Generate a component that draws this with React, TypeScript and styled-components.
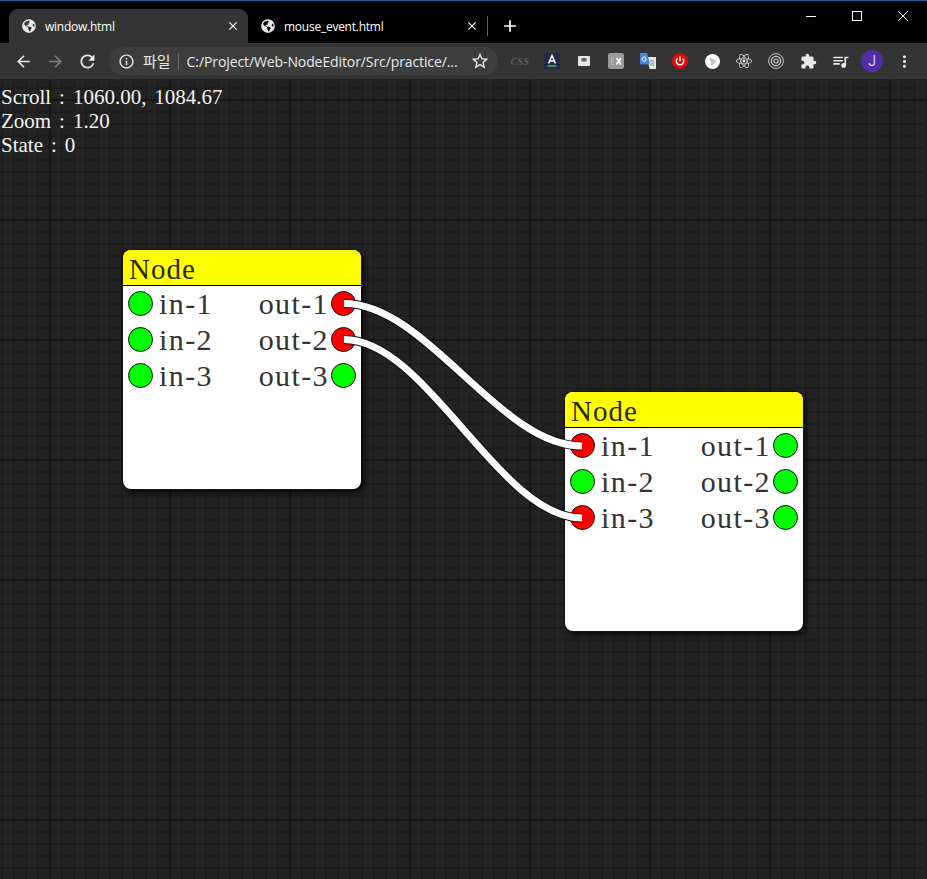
import React from "react";
import styled, { createGlobalStyle } from "styled-components";
import {
  MdAdd,
  MdArrowBack,
  MdArrowForward,
  MdClose,
  MdExtension,
  MdInfoOutline,
  MdMoreVert,
  MdQueueMusic,
  MdRefresh,
  MdStarBorder,
} from "react-icons/md";
import { FaGlobeAmericas, FaReact } from "react-icons/fa";

const GlobalStyle = createGlobalStyle`
  html, body {
    margin: 0;
    padding: 0;
    background: #222;
  }
`;

const Page = styled.div`
  width: 927px;
  height: 879px;
  display: flex;
  flex-direction: column;
  overflow: hidden;
  font-family: "Open Sans", "Noto Sans CJK KR", sans-serif;
`;

const TitleBar = styled.div`
  height: 43px;
  box-sizing: border-box;
  background: #000;
  border-top: 1px solid #1f5f9e;
  padding: 8px 1px 0 9px;
  display: flex;
  align-items: stretch;
  color: #fff;
`;

const Tab = styled.div<{ $active?: boolean }>`
  width: 239px;
  box-sizing: border-box;
  padding: 0 8px 0 13px;
  display: flex;
  align-items: center;
  gap: 9px;
  border-radius: 9px 9px 0 0;
  background: ${(p) => (p.$active ? "#343434" : "transparent")};
  font-size: 12px;
  letter-spacing: -0.25px;
`;

const TabTitle = styled.span`
  flex: 1;
  white-space: nowrap;
`;

const TabDivider = styled.div`
  width: 1px;
  height: 20px;
  margin-top: 7px;
  background: #5f6368;
`;

const NewTab = styled.div`
  width: 44px;
  display: flex;
  align-items: center;
  justify-content: center;
`;

const WindowControls = styled.div`
  margin: -8px 0 0 auto;
  display: flex;
  height: 30px;
`;

const WindowButton = styled.div`
  width: 46px;
  display: flex;
  align-items: center;
  justify-content: center;
`;

const Toolbar = styled.div`
  height: 36px;
  background: #343434;
  display: flex;
  align-items: center;
  color: #f1f3f4;
`;

const NavButton = styled.div<{ $dim?: boolean }>`
  width: 32px;
  height: 32px;
  display: flex;
  align-items: center;
  justify-content: center;
  color: ${(p) => (p.$dim ? "#7e8083" : "#e8eaed")};
`;

const NavGroup = styled.div`
  display: flex;
  padding-left: 7px;
  width: 109px;
  box-sizing: border-box;
`;

const Omnibox = styled.div`
  width: 389px;
  height: 28px;
  box-sizing: border-box;
  border-radius: 14px;
  background: #3d3d3d;
  display: flex;
  align-items: center;
  padding: 0 8px 0 9px;
  color: #e8eaed;
  white-space: nowrap;
`;

const SiteLabel = styled.span`
  margin-left: 8px;
  padding-right: 7px;
  border-right: 1px solid #6b6d70;
  line-height: 17px;
  font-size: 15px;
`;

const Url = styled.span`
  margin-left: 8px;
  flex: 1;
  font-size: 14px;
  letter-spacing: -0.1px;
`;

const Extensions = styled.div`
  margin-left: 6px;
  display: flex;
`;

const Ext = styled.div`
  width: 32px;
  height: 32px;
  display: flex;
  align-items: center;
  justify-content: center;
  color: #e8eaed;
`;

const CssMark = styled.span`
  font-family: "Liberation Serif", serif;
  font-size: 10px;
  font-style: italic;
  font-weight: 700;
  letter-spacing: 0.4px;
  color: #5f5f5f;
`;

const Avatar = styled.div`
  width: 22px;
  height: 22px;
  border-radius: 50%;
  background: #512da8;
  color: #dcd3f2;
  font-family: Roboto, sans-serif;
  font-size: 14px;
  display: flex;
  align-items: center;
  justify-content: center;
`;

const Canvas = styled.div`
  flex: 1;
  position: relative;
  overflow: hidden;
  font-family: "Liberation Serif", "Noto Serif CJK KR", serif;
  background-color: #232323;
  background-image:
    linear-gradient(to right, #161616 2px, transparent 2px),
    linear-gradient(to bottom, #161616 2px, transparent 2px),
    linear-gradient(to right, #1d1d1d 2px, transparent 2px),
    linear-gradient(to bottom, #1d1d1d 2px, transparent 2px);
  background-size: 120px 120px, 120px 120px, 12px 12px, 12px 12px;
  background-position: 49px 0, 0 20px, 1px 0, 0 8px;
`;

const Status = styled.div`
  padding: 6px 0 0 1px;
  font-size: 21px;
  line-height: 24px;
  word-spacing: 2.7px;
  color: #f2f2f2;
`;

const Node = styled.div<{ $x: number; $y: number }>`
  position: absolute;
  left: ${(p) => p.$x}px;
  top: ${(p) => p.$y}px;
  width: 238px;
  height: 239px;
  background: #fff;
  border-radius: 8px;
  overflow: hidden;
  box-shadow: 0 0 0 1px #111, 3px 4px 6px rgba(0, 0, 0, 0.75);
`;

const NodeHeader = styled.div`
  height: 36px;
  box-sizing: border-box;
  background: #ff0;
  border-bottom: 1px solid #000;
  padding-left: 6px;
  font-size: 29px;
  line-height: 38px;
  letter-spacing: 1px;
  color: #2a2a00;
`;

const NodeRow = styled.div`
  height: 36px;
  display: flex;
  justify-content: space-between;
  align-items: center;
  padding: 0 5px;
  font-size: 30px;
  letter-spacing: 1.4px;
  color: #333;
`;

const PortGroup = styled.div<{ $gap: number }>`
  display: flex;
  align-items: center;
  gap: ${(p) => p.$gap}px;
  line-height: 40px;
`;

const Port = styled.span<{ $linked?: boolean }>`
  width: 25px;
  height: 25px;
  margin-bottom: 1px;
  box-sizing: border-box;
  border-radius: 50%;
  border: 1px solid #111;
  background: ${(p) => (p.$linked ? "#f00" : "#0f0")};
`;

const Wires = styled.svg`
  position: absolute;
  left: 0;
  top: 0;
  width: 927px;
  height: 800px;
  pointer-events: none;
`;

const Globe = () => <FaGlobeAmericas size={14} color="#e8eaed" />;

const NodeCard = ({
  x,
  y,
  linkedIn = [],
  linkedOut = [],
}: {
  x: number;
  y: number;
  linkedIn?: number[];
  linkedOut?: number[];
}) => (
  <Node $x={x} $y={y}>
    <NodeHeader>Node</NodeHeader>
    {[1, 2, 3].map((n) => (
      <NodeRow key={n}>
        <PortGroup $gap={6}>
          <Port $linked={linkedIn.includes(n)} />
          <span>in-{n}</span>
        </PortGroup>
        <PortGroup $gap={2}>
          <span>out-{n}</span>
          <Port $linked={linkedOut.includes(n)} />
        </PortGroup>
      </NodeRow>
    ))}
  </Node>
);

const wirePaths = [
  "M344 224.5 C427 224.5 499 367 582 367",
  "M344 260.5 C427 260.5 499 439 582 439",
];

export default function App() {
  return (
    <Page>
      <GlobalStyle />
      <TitleBar>
        <Tab $active>
          <Globe />
          <TabTitle>window.html</TabTitle>
          <MdClose size={14} />
        </Tab>
        <Tab>
          <Globe />
          <TabTitle>mouse_event.html</TabTitle>
          <MdClose size={14} />
        </Tab>
        <TabDivider />
        <NewTab>
          <MdAdd size={20} />
        </NewTab>
        <WindowControls>
          <WindowButton>
            <svg width="10" height="10" viewBox="0 0 10 10">
              <path d="M0 5.5H10" stroke="#fff" />
            </svg>
          </WindowButton>
          <WindowButton>
            <svg width="10" height="10" viewBox="0 0 10 10">
              <rect x="0.5" y="0.5" width="9" height="9" fill="none" stroke="#fff" />
            </svg>
          </WindowButton>
          <WindowButton>
            <svg width="10" height="10" viewBox="0 0 10 10">
              <path d="M0 0L10 10M10 0L0 10" stroke="#fff" />
            </svg>
          </WindowButton>
        </WindowControls>
      </TitleBar>
      <Toolbar>
        <NavGroup>
          <NavButton><MdArrowBack size={19} /></NavButton>
          <NavButton $dim><MdArrowForward size={19} /></NavButton>
          <NavButton><MdRefresh size={21} /></NavButton>
        </NavGroup>
        <Omnibox>
          <MdInfoOutline size={17} />
          <SiteLabel>파일</SiteLabel>
          <Url>C:/Project/Web-NodeEditor/Src/practice/...</Url>
          <MdStarBorder size={20} />
        </Omnibox>
        <Extensions>
          <Ext><CssMark>CSS</CssMark></Ext>
          <Ext>
            <svg width="16" height="16" viewBox="0 0 16 16">
              <rect width="16" height="16" fill="#232a45" />
              <path d="M4.5 10.5L8 2.5L11.5 10.5M6 8H10" fill="none" stroke="#fff" strokeWidth="1.5" />
              <path d="M3.5 13H12.5" stroke="#5fd068" strokeWidth="1.2" />
            </svg>
          </Ext>
          <Ext>
            <svg width="12" height="10" viewBox="0 0 12 10">
              <rect width="12" height="10" rx="1" fill="#e6e6e6" />
              <rect x="3.5" y="2" width="5" height="3.5" fill="#666" />
            </svg>
          </Ext>
          <Ext>
            <svg width="16" height="16" viewBox="0 0 16 16">
              <rect width="16" height="16" rx="2.5" fill="#9a9a9a" />
              <path d="M8.5 5L13 11.5M13 5L8.5 11.5" stroke="#fff" strokeWidth="1.7" />
              <path d="M6 5H3.5V11.5H6M3.5 8H5.5" fill="none" stroke="#b8b8b8" />
            </svg>
          </Ext>
          <Ext>
            <svg width="16" height="16" viewBox="0 0 16 16">
              <path d="M7 4H16V16H9.5Z" fill="#e4e4e4" />
              <path d="M10 8H14M12 8V7M10.5 13L14 9M11 9.5L14 13" stroke="#777" strokeWidth="0.8" fill="none" />
              <path d="M0 0H7L10 11.5H1.5Q0 11.5 0 10Z" fill="#4a86e8" />
              <path d="M6 4.7A2.2 2.2 0 1 0 6 7.5V6H4.5" fill="none" stroke="#fff" />
            </svg>
          </Ext>
          <Ext>
            <svg width="16" height="16" viewBox="0 0 16 16">
              <circle cx="8" cy="8" r="8" fill="#d80d0d" />
              <path d="M8 3.5V8" stroke="#fff" strokeWidth="1.4" />
              <path d="M5.4 5.4A3.7 3.7 0 1 0 10.6 5.4" fill="none" stroke="#fff" strokeWidth="1.4" />
            </svg>
          </Ext>
          <Ext>
            <svg width="15" height="15" viewBox="0 0 15 15">
              <circle cx="7.5" cy="7.5" r="7.5" fill="#fff" />
              <path d="M4.5 3.5L12 7L6.5 12Z" fill="#c4c4c4" />
            </svg>
          </Ext>
          <Ext><FaReact size={16} /></Ext>
          <Ext>
            <svg width="16" height="16" viewBox="0 0 16 16" fill="none" stroke="#c8c8c8">
              <circle cx="8" cy="8" r="7.4" />
              <circle cx="8" cy="8" r="4.6" strokeWidth="1.4" />
              <circle cx="8" cy="8" r="2" strokeWidth="1.2" />
            </svg>
          </Ext>
          <Ext><MdExtension size={17} /></Ext>
          <Ext><MdQueueMusic size={19} /></Ext>
          <Ext><Avatar>J</Avatar></Ext>
          <Ext><MdMoreVert size={19} /></Ext>
        </Extensions>
      </Toolbar>
      <Canvas>
        <Status>
          <div>Scroll : 1060.00, 1084.67</div>
          <div>Zoom : 1.20</div>
          <div>State : 0</div>
        </Status>
        <NodeCard x={123} y={171} linkedOut={[1, 2]} />
        <NodeCard x={565} y={313} linkedIn={[1, 3]} />
        <Wires viewBox="0 0 927 800">
          {wirePaths.map((d) => (
            <g key={d} fill="none">
              <path d={d} stroke="#111" strokeWidth="9" />
              <path d={d} stroke="#fff" strokeWidth="7" />
            </g>
          ))}
        </Wires>
      </Canvas>
    </Page>
  );
}
